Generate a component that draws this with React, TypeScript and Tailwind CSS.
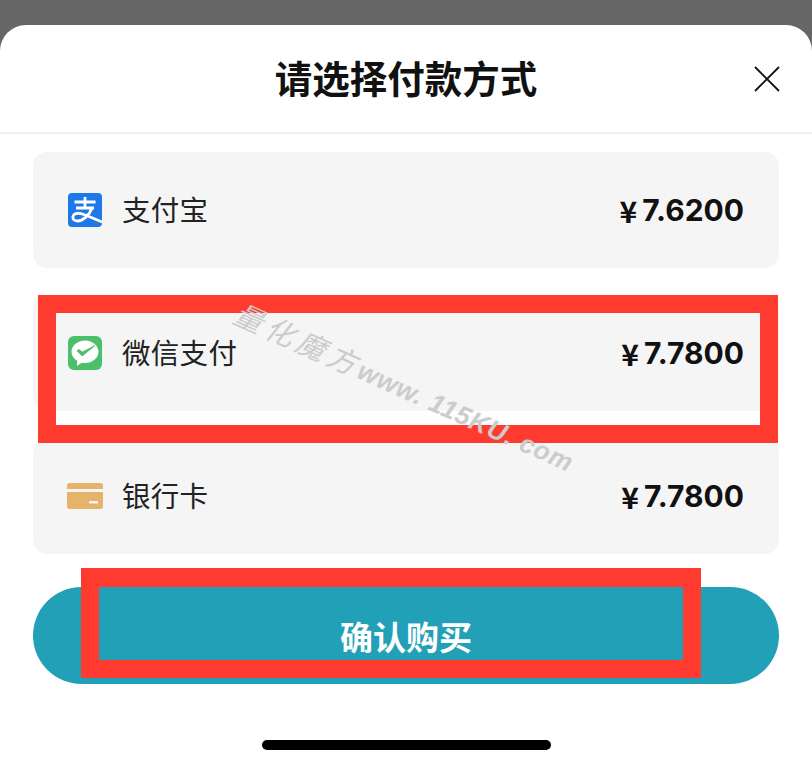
import React from 'react';

const cjk = "font-['Noto_Sans_CJK_SC','Noto_Sans',sans-serif]";

const AlipayIcon = () => (
  <svg width="34" height="34" viewBox="0 0 34 34" className="shrink-0">
    <rect width="34" height="34" rx="4" fill="#1f78e8" />
    <path d="M6.5 9H27.5M17 4V15M8 15H26" stroke="#fff" strokeWidth="2.8" fill="none" />
    <path
      d="M24 15C21.5 22 15 28 9.5 28C6 28 4.5 25.8 5 23.6C5.6 20.8 9 19.6 13 20.6C19 22.2 26 26 34 29"
      stroke="#fff"
      strokeWidth="2.8"
      fill="none"
    />
  </svg>
);

const WechatIcon = () => (
  <svg width="34" height="34" viewBox="0 0 34 34" className="shrink-0">
    <rect width="34" height="34" rx="6" fill="#4cbf6b" />
    <path
      d="M17 4.5C9.6 4.5 3.5 9.6 3.5 15.8C3.5 19.6 5.7 22.8 9.2 24.8L8.8 30L13.8 26.7C14.9 27 15.9 27.1 17 27.1C24.4 27.1 30.5 22 30.5 15.8C30.5 9.6 24.4 4.5 17 4.5Z"
      fill="#fff"
    />
    <path d="M9 14.8L10.8 13.4L14.4 16L27 9.5L14.2 20Z" fill="#4cbf6b" stroke="#4cbf6b" strokeWidth="0.8" strokeLinejoin="round" />
  </svg>
);

const CardIcon = () => (
  <svg width="36" height="26" viewBox="0 0 36 26" className="shrink-0">
    <path d="M0 2.5C0 1 1 0 2.5 0H33.5C35 0 36 1 36 2.5V6H0Z" fill="#e6b36a" />
    <path d="M0 9H36V23.5C36 25 35 26 33.5 26H2.5C1 26 0 25 0 23.5Z" fill="#e6b36a" />
    <rect x="22" y="18" width="9" height="2.5" fill="#f4f4f4" />
  </svg>
);

const methods = [
  { name: '支付宝', price: '7.6200', icon: <AlipayIcon /> },
  { name: '微信支付', price: '7.7800', icon: <WechatIcon /> },
  { name: '银行卡', price: '7.7800', icon: <CardIcon /> },
];

const App: React.FC = () => {
  return (
    <div className={`relative w-[812px] h-[768px] overflow-hidden bg-[#666666] pt-[25px] ${cjk}`}>
      <div className="flex flex-col h-[743px] bg-white rounded-t-[26px]">
        <header className="relative flex items-center justify-center h-[109px] shrink-0 border-b-2 border-[#f0f0f0]">
          <h1 className="text-[37.5px] leading-none font-bold text-[#111111] mb-[4px]">请选择付款方式</h1>
          <svg width="26" height="26" viewBox="0 0 26 26" className="absolute right-[32px] top-[41px]">
            <path d="M1 1L25 25M25 1L1 25" stroke="#111" strokeWidth="1.8" />
          </svg>
        </header>

        <div className="flex flex-col gap-[27px] px-[33px] pt-[18px]">
          {methods.map((m) => (
            <div key={m.name} className="flex items-center justify-between h-[116px] pl-[34px] pr-[35px] bg-[#f5f5f5] rounded-[14px]">
              <div className="flex items-center">
                <div className="flex justify-center w-[35px]">{m.icon}</div>
                <span className="ml-[20px] text-[28.5px] leading-none text-[#222222] mb-[2px] tracking-[0.3px]">{m.name}</span>
              </div>
              <span className="flex items-center text-[30px] leading-none font-bold text-[#111111] font-['Inter',sans-serif] mb-[1px]">
                <span className={`text-[30px] mr-[5px] ${cjk}`}>¥</span>
                {m.price}
              </span>
            </div>
          ))}
        </div>

        <button className="flex items-center justify-center mx-[33px] mt-[33px] h-[97px] shrink-0 rounded-full bg-[#22a0b8] text-white text-[33px] font-bold leading-none">
          <span className="mt-[1px]">确认购买</span>
        </button>

        <div className="mt-[56px] mx-auto w-[289px] h-[10px] shrink-0 rounded-full bg-black" />
      </div>

      {/* annotation frames */}
      <div className="absolute left-[38px] top-[295px] w-[740px] h-[148px] border-[18px] border-[#ff3b30]" />
      <div className="absolute left-[81px] top-[568px] w-[620px] h-[110px] border-x-[18px] border-t-[19px] border-b-[18px] border-[#ff3b30]" />

      {/* watermark */}
      <div className="absolute left-[236px] top-[296px] origin-left rotate-[24deg] whitespace-nowrap text-[#cccccc] italic leading-none">
        <span className="text-[29px] tracking-[5px] font-['Noto_Sans_CJK_SC',sans-serif]">量化魔方</span>
        <span className="text-[26px] font-bold tracking-[0.8px] font-['Liberation_Sans',sans-serif]">www. 115KU. com</span>
      </div>
    </div>
  );
};

export default App;
